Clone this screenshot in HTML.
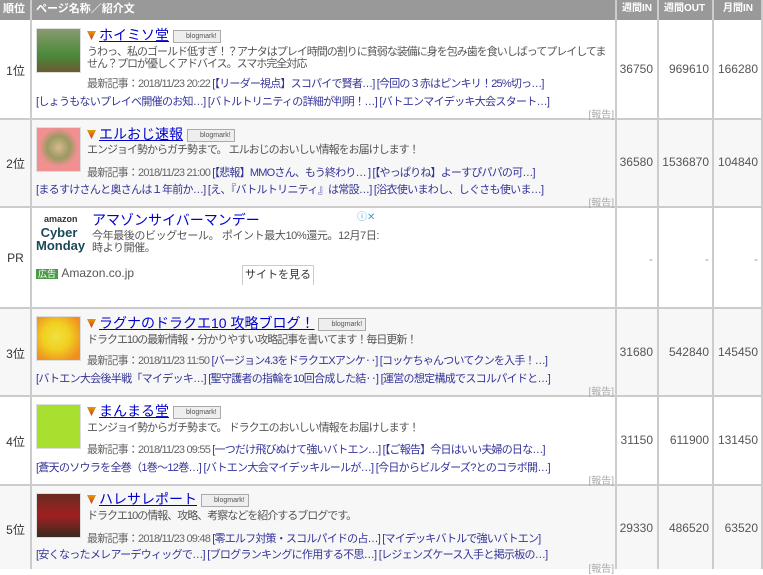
<!DOCTYPE html>
<html><head><meta charset="utf-8"><style>
*{margin:0;padding:0;box-sizing:border-box}
body{width:763px;height:569px;overflow:hidden;background:#fff;font-family:"Liberation Sans","Noto Sans CJK JP",sans-serif;font-size:11px;color:#555;position:relative}
.a{position:absolute;white-space:nowrap}
.hd{position:absolute;top:0;height:20px;background:#999}
.vl{position:absolute;top:0;width:2px;height:569px;background:#ccc}
.hl{position:absolute;left:0;width:763px;height:2px;background:#ccc}
.rk{position:absolute;left:0;width:31px;text-align:center;color:#333;font-size:12px}
.num{position:absolute;text-align:right;color:#555;font-size:12px}
.img{position:absolute;left:36px;width:45px;height:45px;border:1px solid #ddd}
.t{position:absolute;left:87px;white-space:nowrap;font-size:14px;color:#00c;text-decoration:underline}
.t i{display:inline-block;width:9px;height:9px;background:linear-gradient(#e0a000,#c33);clip-path:polygon(0 0,100% 0,50% 100%);margin-right:3px;vertical-align:0}
.bm{display:inline-block;border:1px solid #aaa;background:#eee;font-size:7px;color:#555;padding:2px 3px 2px 12px;margin-left:4px;vertical-align:2px;text-decoration:none;letter-spacing:0}
.d{position:absolute;left:87px;font-size:11px;color:#555;line-height:12px;letter-spacing:-1px;white-space:nowrap}
.n{position:absolute;left:87px;white-space:nowrap;font-size:11px;color:#666;letter-spacing:-0.8px}
.n span,.l{color:#339}
.l{position:absolute;left:36px;white-space:nowrap;font-size:11px;letter-spacing:-0.7px}
.rp{position:absolute;right:149px;font-size:10px;color:#aaa}
.hx{color:#fff;font-weight:bold;line-height:18px}
</style></head><body>
<div class="hd" style="left:0;width:763px"></div>
<div class="a hx" style="left:3px;top:0">順位</div>
<div class="a hx" style="left:36px;top:0">ページ名称／紹介文</div>
<div class="a hx" style="left:622px;top:0;font-size:10px">週間IN</div>
<div class="a hx" style="left:664px;top:0;font-size:10px">週間OUT</div>
<div class="a hx" style="left:723px;top:0;font-size:10px">月間IN</div>

<div style="position:absolute;left:0;top:120px;width:763px;height:87px;background:#f7f7f7"></div>
<div style="position:absolute;left:0;top:309px;width:763px;height:87px;background:#f7f7f7"></div>
<div style="position:absolute;left:0;top:486px;width:763px;height:83px;background:#f7f7f7"></div>

<div class="vl" style="left:30px"></div><div class="vl" style="left:615px"></div><div class="vl" style="left:657px"></div><div class="vl" style="left:712px"></div><div class="vl" style="left:761px"></div>
<div class="hl" style="top:118px"></div><div class="hl" style="top:206px"></div><div class="hl" style="top:307px"></div><div class="hl" style="top:395px"></div><div class="hl" style="top:484px"></div>

<!-- row1 -->
<div class="rk" style="top:62px">1位</div>
<div class="img" style="top:28px;background:linear-gradient(#8a9a70,#4a8a3a 60%,#6a5a30)"></div>
<div class="t" style="top:25px"><i></i>ホイミソ堂<span class="bm">blogmark!</span></div>
<div class="d" style="top:46px">うわっ、私のゴールド低すぎ！？アナタはプレイ時間の割りに貧弱な装備に身を包み歯を食いしばってプレイしてま<br>せん？プロが優しくアドバイス。スマホ完全対応</div>
<div class="n" style="top:75px">最新記事：2018/11/23 20:22 <span>[【リーダー視点】スコパイで賢者…] [今回の３赤はピンキリ！25%切っ…]</span></div>
<div class="l" style="top:93px">[しょうもないプレイベ開催のお知…] [バトルトリニティの詳細が判明！…] [バトエンマイデッキ大会スタート…]</div>
<div class="rp" style="top:106px">[報告]</div>
<div class="num" style="left:617px;width:36px;top:62px">36750</div>
<div class="num" style="left:659px;width:50px;top:62px">969610</div>
<div class="num" style="left:714px;width:44px;top:62px">166280</div>

<!-- row2 -->
<div class="rk" style="top:155px">2位</div>
<div class="img" style="top:127px;background:radial-gradient(circle at 50% 45%,#d8b890 0,#9a9a60 35%,#f09090 60%)"></div>
<div class="t" style="top:124px"><i></i>エルおじ速報<span class="bm">blogmark!</span></div>
<div class="d" style="top:144px">エンジョイ勢からガチ勢まで。 エルおじのおいしい情報をお届けします！</div>
<div class="n" style="top:164px">最新記事：2018/11/23 21:00 <span>[【悲報】MMOさん、もう終わり… ] [【やっぱりね】よーすぴパパの可…]</span></div>
<div class="l" style="top:181px">[まるすけさんと奥さんは１年前か…] [え、『バトルトリニティ』は常設…] [浴衣使いまわし、しぐさも使いま…]</div>
<div class="rp" style="top:194px">[報告]</div>
<div class="num" style="left:617px;width:36px;top:155px">36580</div>
<div class="num" style="left:659px;width:50px;top:155px">1536870</div>
<div class="num" style="left:714px;width:44px;top:155px">104840</div>

<!-- PR -->
<div class="rk" style="top:251px">PR</div>
<div class="a" style="left:44px;top:214px;font-size:9px;color:#333;font-weight:bold">amazon</div>
<div class="a" style="left:36px;top:226px;font-size:13px;color:#1a4a5a;font-weight:bold;line-height:13px;text-align:center;width:46px">Cyber<br>Monday</div>
<div class="a" style="left:92px;top:210px;font-size:14px;color:#00c">アマゾンサイバーマンデー</div>
<div class="a" style="left:92px;top:230px;font-size:11px;color:#555;line-height:12px;letter-spacing:-0.4px">今年最後のビッグセール。 ポイント最大10%還元。12月7日:<br>時より開催。</div>
<div class="a" style="left:36px;top:266px;font-size:12px;color:#555"><span style="background:#4a9a4a;color:#fff;font-size:9px;padding:0 2px">広告</span> Amazon.co.jp</div>
<div class="a" style="left:242px;top:265px;width:72px;height:20px;border:1px solid #ccc;border-bottom:none;font-size:11px;color:#333;text-align:center;line-height:19px">サイトを見る</div>
<div class="a" style="left:357px;top:208px;font-size:10px;color:#3aa0d0">ⓘ✕</div>
<div class="num" style="left:617px;width:36px;top:252px;color:#999">-</div>
<div class="num" style="left:659px;width:50px;top:252px;color:#999">-</div>
<div class="num" style="left:714px;width:44px;top:252px;color:#999">-</div>

<!-- row3 -->
<div class="rk" style="top:345px">3位</div>
<div class="img" style="top:316px;background:radial-gradient(circle at 45% 45%,#f0e040 0,#f0d020 40%,#f09020 80%)"></div>
<div class="t" style="top:313px"><i></i>ラグナのドラクエ10 攻略ブログ！<span class="bm">blogmark!</span></div>
<div class="d" style="top:334px">ドラクエ10の最新情報・分かりやすい攻略記事を書いてます！毎日更新！</div>
<div class="n" style="top:352px">最新記事：2018/11/23 11:50 <span>[バージョン4.3をドラクエXアンケ‥] [コッケちゃんついてクンを入手！…]</span></div>
<div class="l" style="top:370px">[バトエン大会後半戦「マイデッキ…] [聖守護者の指輪を10回合成した結‥] [運営の想定構成でスコルパイドと…]</div>
<div class="rp" style="top:383px">[報告]</div>
<div class="num" style="left:617px;width:36px;top:345px">31680</div>
<div class="num" style="left:659px;width:50px;top:345px">542840</div>
<div class="num" style="left:714px;width:44px;top:345px">145450</div>

<!-- row4 -->
<div class="rk" style="top:433px">4位</div>
<div class="img" style="top:404px;background:#a8e030"></div>
<div class="t" style="top:401px"><i></i>まんまる堂<span class="bm">blogmark!</span></div>
<div class="d" style="top:422px">エンジョイ勢からガチ勢まで。 ドラクエのおいしい情報をお届けします！</div>
<div class="n" style="top:441px">最新記事：2018/11/23 09:55 <span>[一つだけ飛びぬけて強いバトエン…] [【ご報告】今日はいい夫婦の日な…]</span></div>
<div class="l" style="top:459px">[蒼天のソウラを全巻（1巻〜12巻…] [バトエン大会マイデッキルールが…] [今日からビルダーズ?とのコラボ開…]</div>
<div class="rp" style="top:472px">[報告]</div>
<div class="num" style="left:617px;width:36px;top:433px">31150</div>
<div class="num" style="left:659px;width:50px;top:433px">611900</div>
<div class="num" style="left:714px;width:44px;top:433px">131450</div>

<!-- row5 -->
<div class="rk" style="top:521px">5位</div>
<div class="img" style="top:493px;background:linear-gradient(#6a2a20,#a02020 50%,#3a2a20)"></div>
<div class="t" style="top:489px"><i></i>ハレサレポート<span class="bm">blogmark!</span></div>
<div class="d" style="top:510px">ドラクエ10の情報、攻略、考察などを紹介するブログです。</div>
<div class="n" style="top:530px">最新記事：2018/11/23 09:48 <span>[零エルフ対策・スコルパイドの占…] [マイデッキバトルで強いバトエン]</span></div>
<div class="l" style="top:546px">[安くなったメレアーデウィッグで…] [ブログランキングに作用する不思…] [レジェンズケース入手と掲示板の…]</div>
<div class="rp" style="top:560px">[報告]</div>
<div class="num" style="left:617px;width:36px;top:521px">29330</div>
<div class="num" style="left:659px;width:50px;top:521px">486520</div>
<div class="num" style="left:714px;width:44px;top:521px">63520</div>
</body></html>
